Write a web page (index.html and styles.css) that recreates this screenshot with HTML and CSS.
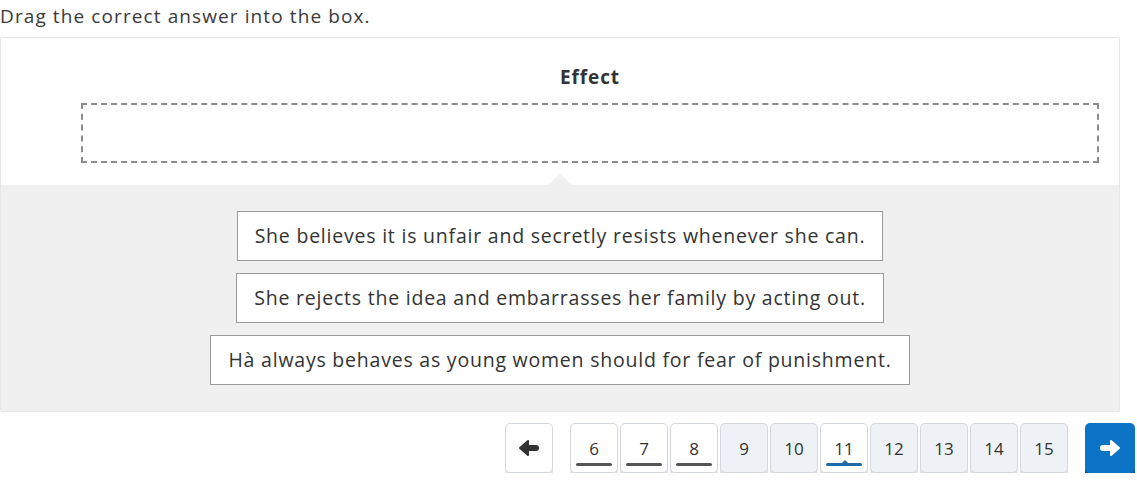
FILE: index.html
```html
<!DOCTYPE html>
<html>
<head>
<meta charset="utf-8">
<link rel="stylesheet" href="styles.css">
</head>
<body>
<div class="instruction">Drag the correct answer into the box.</div>
<div class="panel">
  <div class="target-area">
    <div class="target-title">Effect</div>
    <div class="dropbox"></div>
  </div>
  <div class="options">
    <span class="notch"></span>
    <div class="option">She believes it is unfair and secretly resists whenever she can.</div>
    <div class="option">She rejects the idea and embarrasses her family by acting out.</div>
    <div class="option">Hà always behaves as young women should for fear of punishment.</div>
  </div>
</div>
<div class="pager">
  <button class="pbtn arrow prev"><svg viewBox="0 0 22 18" width="22" height="18"><path fill="#333" stroke="#333" stroke-width="2" stroke-linejoin="round" d="M2 9 L10 2 L10 16 Z"/><rect x="8" y="6" width="13" height="6" rx="3" fill="#333"/></svg></button>
  <div class="pages">
    <button class="pbtn done">6</button>
    <button class="pbtn done">7</button>
    <button class="pbtn done">8</button>
    <button class="pbtn todo">9</button>
    <button class="pbtn todo">10</button>
    <button class="pbtn current">11</button>
    <button class="pbtn todo">12</button>
    <button class="pbtn todo">13</button>
    <button class="pbtn todo">14</button>
    <button class="pbtn todo">15</button>
  </div>
  <button class="pbtn next"><svg viewBox="0 0 22 18" width="22" height="18"><path fill="#fff" stroke="#fff" stroke-width="2" stroke-linejoin="round" d="M20 9 L12 2 L12 16 Z"/><rect x="1" y="6" width="13" height="6" rx="3" fill="#fff"/></svg></button>
</div>
</body>
</html>
```
FILE: styles.css
```css
* { box-sizing: border-box; }
body {
  margin: 0;
  width: 1137px;
  font-family: "Open Sans", "DejaVu Sans", sans-serif;
  color: #333;
  background: #fff;
}
.instruction {
  height: 37px;
  line-height: 33px;
  font-size: 19px;
  letter-spacing: 1.1px;
  color: #3a3a3a;
}
.panel {
  width: 1120px;
  border: 1px solid #e6e6e6;
  border-radius: 2px;
}
.target-area {
  height: 147px;
  padding: 24px 20px 0 80px;
  background: #fff;
}
.target-title {
  text-align: center;
  font-weight: 700;
  font-size: 19px;
  letter-spacing: 0.9px;
  line-height: 30px;
  color: #333;
  height: 41px;
}
.dropbox {
  height: 60px;
  border: 2px dashed #8c8c8c;
}
.options {
  position: relative;
  background: #f0f0f0;
  padding: 26px 0 26px;
  display: flex;
  flex-direction: column;
  align-items: center;
  gap: 12px;
}
.notch {
  position: absolute;
  top: -11px;
  left: 547px;
  width: 0;
  height: 0;
  border-left: 12px solid transparent;
  border-right: 12px solid transparent;
  border-bottom: 11px solid #f0f0f0;
}
.option {
  background: #fff;
  border: 1px solid #9a9a9a;
  height: 50px;
  line-height: 48px;
  padding: 0 17px;
  font-size: 19.5px;
  letter-spacing: 0.78px;
  color: #333;
  white-space: nowrap;
}
.pager {
  display: flex;
  justify-content: flex-end;
  align-items: flex-start;
  gap: 17px;
  padding: 11px 2px 0 0;
}
.pages {
  display: flex;
  gap: 2px;
}
.pbtn {
  position: relative;
  width: 48px;
  height: 50px;
  border: 1px solid #d3d8de;
  border-radius: 5px;
  background: #fff;
  box-shadow: 0 4px 0 #e3e3e3;
  font-family: inherit;
  font-size: 17px;
  color: #333;
  padding: 0;
  display: flex;
  align-items: center;
  justify-content: center;
}
.pbtn.todo { background: #eef2f6; }
.pbtn.done::after, .pbtn.current::after {
  content: "";
  position: absolute;
  left: 5px;
  right: 5px;
  bottom: 6px;
  height: 3px;
  border-radius: 2px;
  background: #555;
}
.pbtn.current::after { background: #1f6aa8; }
.pbtn.current::before {
  content: "";
  position: absolute;
  left: 20px;
  bottom: 8px;
  width: 0;
  height: 0;
  border-left: 4px solid transparent;
  border-right: 4px solid transparent;
  border-bottom: 4px solid #1f6aa8;
}
.pbtn.next {
  width: 50px;
  height: 50px;
  background: #0c74c6;
  border: none;
  box-shadow: 0 4px 0 #075b9e;
}
```
